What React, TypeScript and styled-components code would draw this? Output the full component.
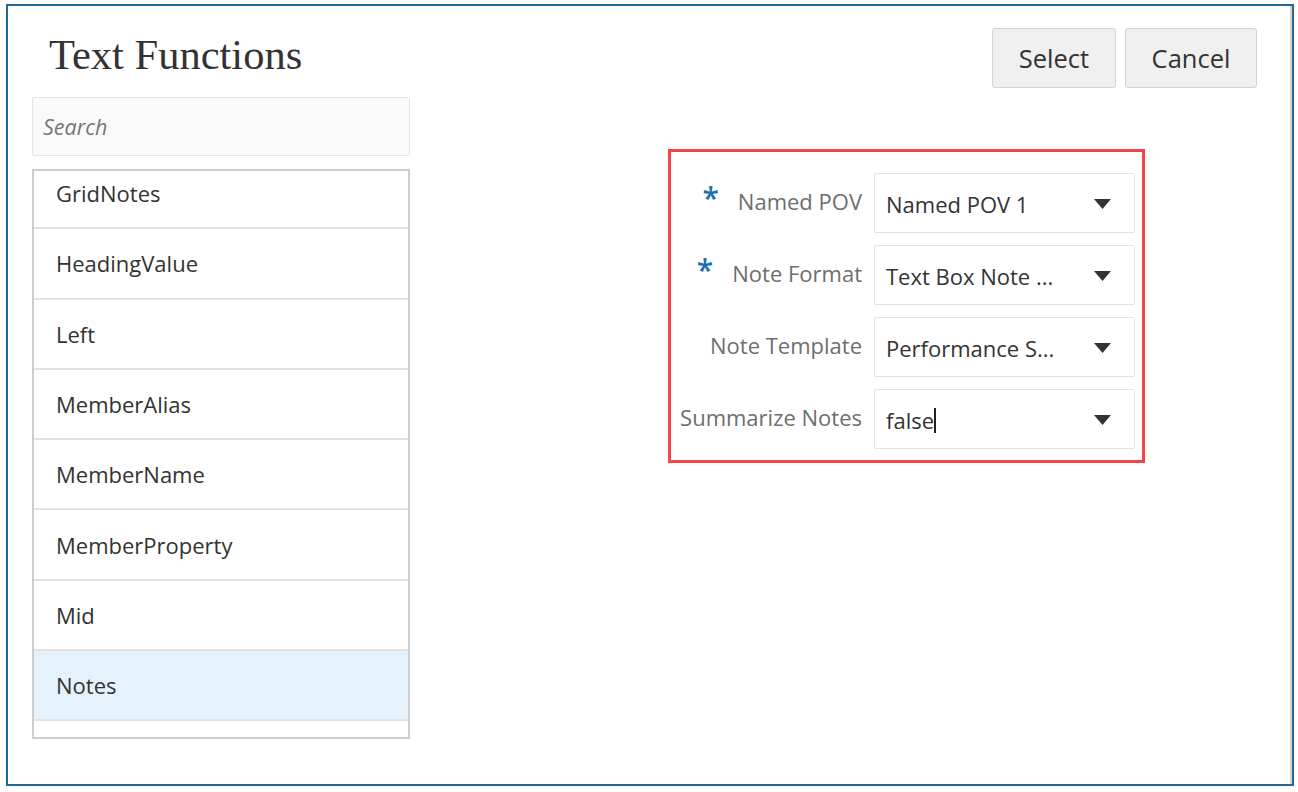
import * as React from 'react';
import styled, { createGlobalStyle } from 'styled-components';

const GlobalStyle = createGlobalStyle`
  html, body {
    margin: 0;
    padding: 0;
    background: #ffffff;
  }
  body {
    font-family: 'Open Sans', 'Noto Sans', sans-serif;
    color: #333333;
  }
  * { box-sizing: border-box; }
`;

const Page = styled.div`
  padding: 4px 0 0 6px;
`;

const Frame = styled.div`
  width: 1288px;
  height: 782px;
  border: 2px solid #22689b;
  box-shadow: inset -2px 0 0 #d4d4d4;
  display: flex;
  flex-direction: column;
  padding: 22px 35px 0 24px;
`;

const Header = styled.div`
  display: flex;
  justify-content: space-between;
  align-items: flex-start;
`;

const Title = styled.h1`
  margin: 3px 0 0 17px;
  font-family: 'Liberation Serif', 'DejaVu Serif', serif;
  font-weight: 400;
  font-size: 42.5px;
  line-height: 47px;
  color: #333333;
`;

const Buttons = styled.div`
  display: flex;
  gap: 9px;
`;

const Button = styled.button<{ $w: number }>`
  width: ${(p) => p.$w}px;
  height: 60px;
  background: #f0f0f0;
  border: 1px solid #d3d3d3;
  border-radius: 3px;
  font-family: 'Open Sans', sans-serif;
  font-size: 25.5px;
  color: #333333;
  padding: 0;
  cursor: pointer;
`;

const Body = styled.div`
  display: flex;
  margin-top: 9px;
`;

const LeftCol = styled.div`
  width: 378px;
  display: flex;
  flex-direction: column;
  gap: 13px;
`;

const SearchInput = styled.input`
  height: 59px;
  width: 100%;
  background: #fafafa;
  border: 1px solid #e4e4e4;
  border-radius: 2px;
  padding: 0 0 0 10px;
  font-family: 'Open Sans', sans-serif;
  font-size: 21.5px;
  color: #333;
  outline: none;

  &::placeholder {
    color: #767676;
    font-style: italic;
  }
`;

const List = styled.div`
  height: 570px;
  border: 2px solid #cdcdcd;
  overflow: hidden;
`;

const ListInner = styled.div<{ $offset: number }>`
  margin-top: -${(p) => p.$offset}px;
`;

const Row = styled.div<{ $selected?: boolean }>`
  height: 70.3px;
  display: flex;
  align-items: center;
  padding-left: 22px;
  border-bottom: 2px solid #e2e2e2;
  background: ${(p) => (p.$selected ? '#e6f2fb' : '#ffffff')};
  font-size: 22px;
  color: #333333;
`;

const RightCol = styled.div`
  margin: 52px 0 0 258px;
`;

const Highlight = styled.div`
  width: 477px;
  border: 3px solid #f2454a;
  padding: 21px 7px 11px 9px;
  display: grid;
  grid-template-columns: 1fr 261px;
  column-gap: 12px;
  row-gap: 12px;
`;

const LabelCell = styled.div`
  display: flex;
  justify-content: flex-end;
  align-items: center;
  padding-bottom: 4px;
  gap: 19px;
`;

const Required = styled.span`
  color: #1f6fb0;
  font-size: 30px;
  line-height: 1;
  font-weight: 600;
  transform: translateY(-3px);
`;

const LabelText = styled.span`
  font-size: 22px;
  color: #6e6e6e;
  white-space: nowrap;
`;

const SelectBox = styled.div`
  height: 60px;
  border: 1px solid #e2e2e2;
  border-radius: 2px;
  background: #ffffff;
  display: flex;
  align-items: center;
  justify-content: space-between;
  padding: 2px 23px 0 11px;
  font-size: 22px;
  color: #333333;
`;

const Value = styled.span`
  display: flex;
  align-items: center;
  white-space: nowrap;
`;

const Caret = styled.span`
  display: inline-block;
  width: 2px;
  height: 25px;
  background: #222;
`;

const Arrow = () => (
  <svg width="17" height="10" viewBox="0 0 17 10">
    <polygon points="0,0 17,0 8.5,10" fill="#333333" />
  </svg>
);

const items = [
  'GridNotes',
  'HeadingValue',
  'Left',
  'MemberAlias',
  'MemberName',
  'MemberProperty',
  'Mid',
  'Notes',
];

const fields = [
  { label: 'Named POV', value: 'Named POV 1', required: true },
  { label: 'Note Format', value: 'Text Box Note ...', required: true },
  { label: 'Note Template', value: 'Performance S...', required: false },
  { label: 'Summarize Notes', value: 'false', required: false, caret: true },
];

export default function App() {
  return (
    <Page>
      <GlobalStyle />
      <Frame>
        <Header>
          <Title>Text Functions</Title>
          <Buttons>
            <Button $w={124}>Select</Button>
            <Button $w={132}>Cancel</Button>
          </Buttons>
        </Header>
        <Body>
          <LeftCol>
            <SearchInput placeholder="Search" />
            <List>
              <ListInner $offset={12}>
                {items.map((it) => (
                  <Row key={it} $selected={it === 'Notes'}>
                    {it}
                  </Row>
                ))}
              </ListInner>
            </List>
          </LeftCol>
          <RightCol>
            <Highlight>
              {fields.map((f) => (
                <React.Fragment key={f.label}>
                  <LabelCell>
                    {f.required && <Required>*</Required>}
                    <LabelText>{f.label}</LabelText>
                  </LabelCell>
                  <SelectBox>
                    <Value>
                      {f.value}
                      {f.caret && <Caret />}
                    </Value>
                    <Arrow />
                  </SelectBox>
                </React.Fragment>
              ))}
            </Highlight>
          </RightCol>
        </Body>
      </Frame>
    </Page>
  );
}
